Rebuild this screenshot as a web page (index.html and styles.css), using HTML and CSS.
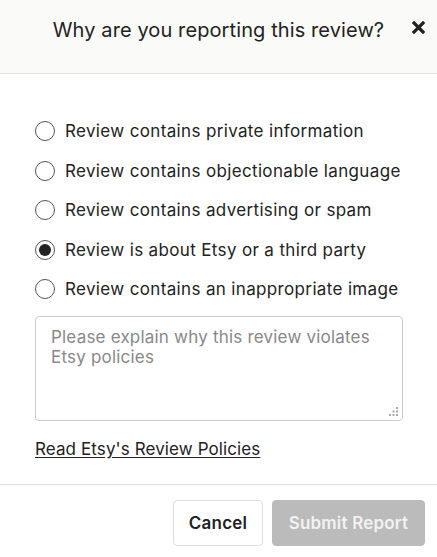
FILE: index.html
```html
<!DOCTYPE html>
<html>
<head>
<meta charset="utf-8">
<link rel="stylesheet" href="styles.css">
</head>
<body>
<div class="modal">
  <header class="head">
    <h1 class="title">Why are you reporting this review?</h1>
    <button class="close" aria-label="Close">
      <svg width="13" height="13" viewBox="0 0 13 13"><path d="M2 2 L11 11 M11 2 L2 11" stroke="#222" stroke-width="3.2" stroke-linecap="square"/></svg>
    </button>
  </header>
  <main class="body">
    <ul class="options">
      <li class="opt"><span class="radio"></span><span>Review contains private information</span></li>
      <li class="opt"><span class="radio"></span><span>Review contains objectionable language</span></li>
      <li class="opt"><span class="radio"></span><span>Review contains advertising or spam</span></li>
      <li class="opt"><span class="radio checked"></span><span>Review is about Etsy or a third party</span></li>
      <li class="opt"><span class="radio"></span><span>Review contains an inappropriate image</span></li>
    </ul>
    <div class="field">
      <textarea class="explain" placeholder="Please explain why this review violates Etsy policies"></textarea>
      <svg class="grip" width="10" height="10" viewBox="0 0 10 10" fill="#aaa">
        <rect x="7" y="0" width="2" height="2"/>
        <rect x="3.5" y="3.5" width="2" height="2"/><rect x="7" y="3.5" width="2" height="2"/>
        <rect x="0" y="7" width="2" height="2"/><rect x="3.5" y="7" width="2" height="2"/><rect x="7" y="7" width="2" height="2"/>
      </svg>
    </div>
    <a class="policy" href="#">Read Etsy's Review Policies</a>
  </main>
  <footer class="foot">
    <button class="btn cancel">Cancel</button>
    <button class="btn submit">Submit Report</button>
  </footer>
</div>
</body>
</html>
```

FILE: styles.css
```css
* { box-sizing: border-box; }
html, body { margin: 0; padding: 0; background: #fff; }
body { font-family: "Inter", "Roboto", sans-serif; color: #222; }
.modal { width: 437px; }
.head {
  position: relative;
  height: 74px;
  background: #fafaf8;
  border-bottom: 1px solid #e1e1e1;
  display: flex;
  justify-content: center;
}
.title {
  margin: 0;
  padding-top: 16px;
  font-size: 20px;
  font-weight: 400;
  line-height: 28px;
  color: #222;
  letter-spacing: 0.1px;
}
.close {
  position: absolute;
  right: 11px;
  top: 21px;
  width: 14px;
  height: 14px;
  padding: 0;
  border: 0;
  background: none;
  display: flex;
}
.body { padding: 46px 0 0 35px; }
.options { list-style: none; margin: 0; padding: 0; display: flex; flex-direction: column; gap: 17.5px; }
.opt { display: flex; align-items: center; gap: 10px; font-size: 17px; letter-spacing: 0.35px; line-height: 22px; color: #222; white-space: nowrap; }
.radio {
  width: 20px; height: 20px; border-radius: 50%;
  border: 1.5px solid #555; background: #fff; flex: none;
  display: flex; align-items: center; justify-content: center;
}
.radio.checked::after { content: ""; width: 12px; height: 12px; border-radius: 50%; background: #222; }
.field { position: relative; margin-top: 16px; width: 368px; }
.explain {
  display: block;
  width: 368px;
  height: 105px;
  border: 1px solid #ccc;
  border-radius: 4px;
  padding: 10px 15px;
  font-family: inherit;
  font-size: 17px;
  letter-spacing: 0.2px;
  line-height: 20px;
  resize: none;
}
.explain::placeholder { color: #888; }
.grip { position: absolute; right: 4px; bottom: 4px; }
.policy {
  display: inline-block;
  margin-top: 17px;
  font-size: 17px;
  letter-spacing: 0.1px;
  line-height: 22px;
  color: #222;
  text-decoration: underline;
  text-underline-offset: 2px;
}
.foot {
  margin-top: 24px;
  border-top: 1px solid #e1e1e1;
  padding: 15px 12px 0 0;
  display: flex;
  justify-content: flex-end;
  gap: 9px;
}
.btn {
  height: 46px;
  border-radius: 4px;
  font-family: inherit;
  font-size: 17px;
  font-weight: 600;
  letter-spacing: 0.2px;
}
.cancel { width: 90px; background: #fff; border: 1px solid #ddd; color: #222; }
.submit { width: 153px; background: #bbb; border: 1px solid #bbb; color: #f2f2f2; }
```
